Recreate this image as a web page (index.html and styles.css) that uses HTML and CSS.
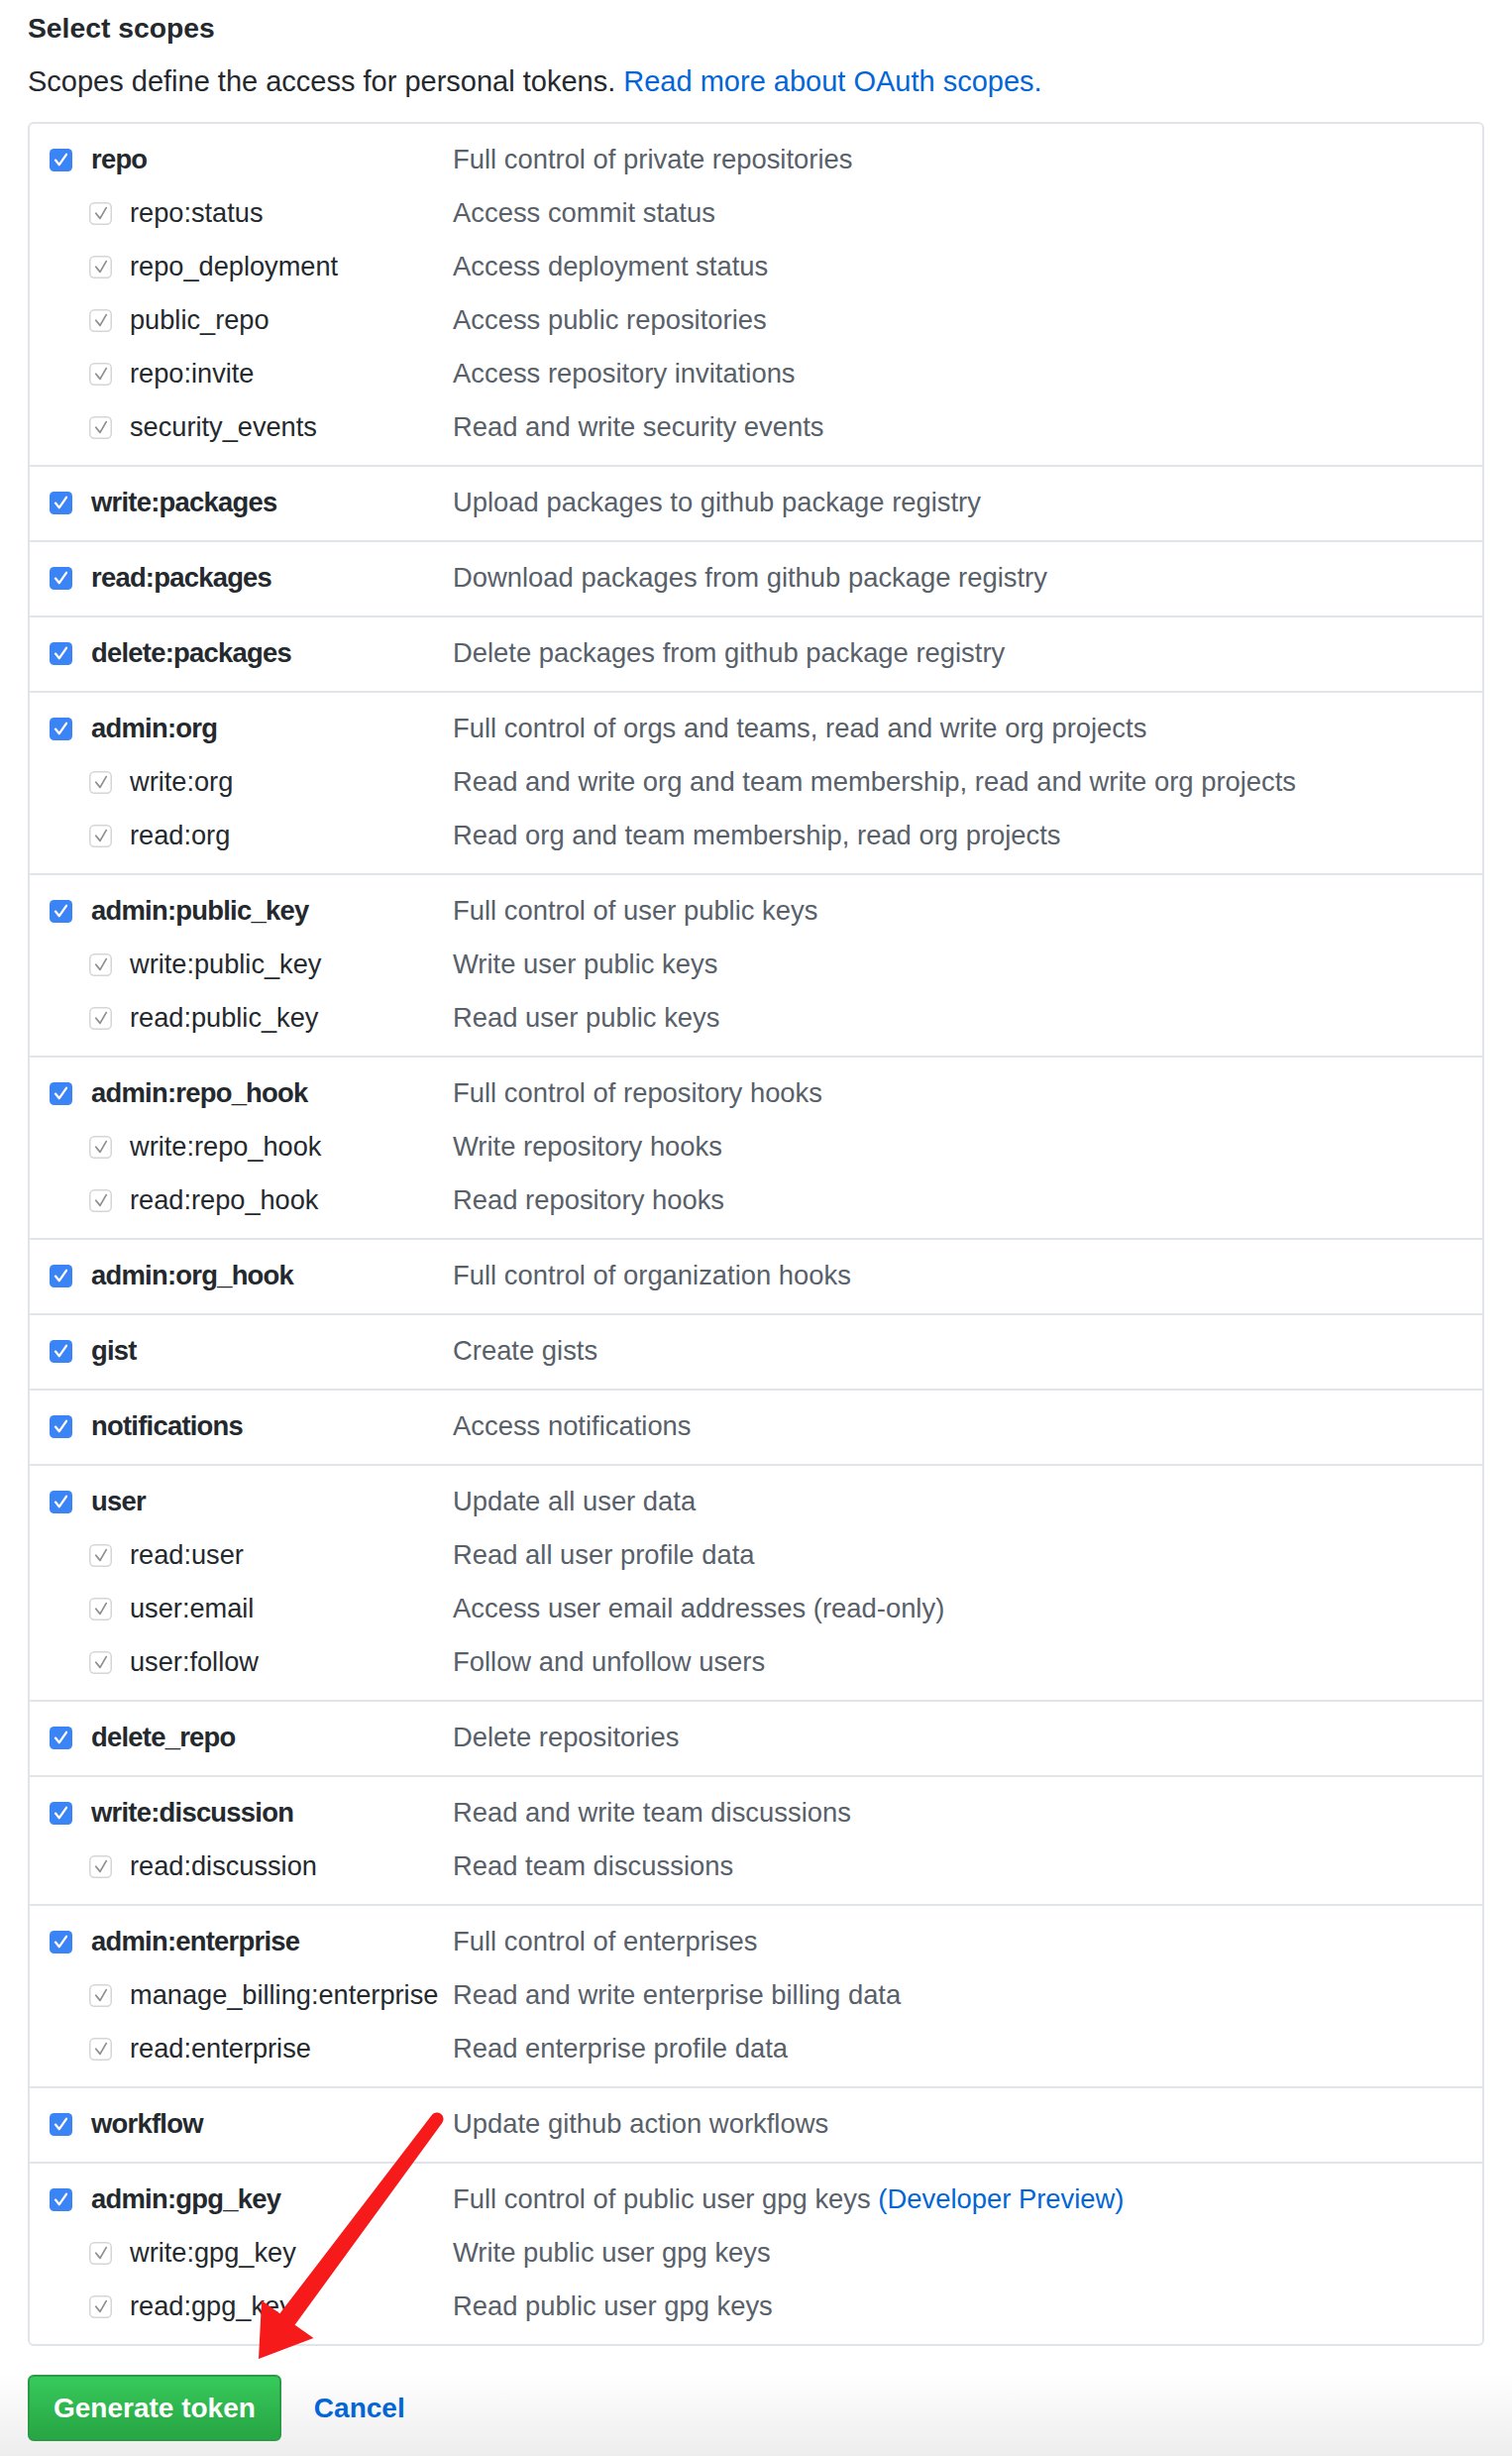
FILE: index.html
```html
<!DOCTYPE html>
<html lang="en">
<head>
<meta charset="utf-8">
<title>Select scopes</title>
<link rel="stylesheet" href="styles.css">
</head>
<body>
<svg class="defs" width="0" height="0" aria-hidden="true">
  <defs>
    <symbol id="on" viewBox="0 0 23 23">
      <rect x="0" y="0" width="23" height="23" rx="4.5" fill="#3a84f6"/>
      <path d="M6 11.6 L9.8 16.2 L17 5.8" fill="none" stroke="#fff" stroke-width="2.3" stroke-linecap="round" stroke-linejoin="round"/>
    </symbol>
    <symbol id="sub" viewBox="0 0 23 23">
      <rect x="0.75" y="0.75" width="21.5" height="21.5" rx="4.5" fill="#fff" stroke="#d6d6d6" stroke-width="1.5"/>
      <path d="M6.8 11.2 L11 16.4 L17.2 5.6" fill="none" stroke="#8f8f8f" stroke-width="1.7" stroke-linecap="round" stroke-linejoin="round"/>
    </symbol>
  </defs>
</svg>

<main class="page">
  <h2 class="title">Select scopes</h2>
  <p class="intro">Scopes define the access for personal tokens. <a class="link" href="#">Read more about OAuth scopes.</a></p>

  <div class="scopes">
    <div class="group">
      <div class="row main"><span class="name"><svg class="cb"><use href="#on"/></svg><b>repo</b></span><span class="desc">Full control of private repositories</span></div>
      <div class="row sub"><span class="name"><svg class="cb"><use href="#sub"/></svg>repo:status</span><span class="desc">Access commit status</span></div>
      <div class="row sub"><span class="name"><svg class="cb"><use href="#sub"/></svg>repo_deployment</span><span class="desc">Access deployment status</span></div>
      <div class="row sub"><span class="name"><svg class="cb"><use href="#sub"/></svg>public_repo</span><span class="desc">Access public repositories</span></div>
      <div class="row sub"><span class="name"><svg class="cb"><use href="#sub"/></svg>repo:invite</span><span class="desc">Access repository invitations</span></div>
      <div class="row sub"><span class="name"><svg class="cb"><use href="#sub"/></svg>security_events</span><span class="desc">Read and write security events</span></div>
    </div>
    <div class="group">
      <div class="row main"><span class="name"><svg class="cb"><use href="#on"/></svg><b>write:packages</b></span><span class="desc">Upload packages to github package registry</span></div>
    </div>
    <div class="group">
      <div class="row main"><span class="name"><svg class="cb"><use href="#on"/></svg><b>read:packages</b></span><span class="desc">Download packages from github package registry</span></div>
    </div>
    <div class="group">
      <div class="row main"><span class="name"><svg class="cb"><use href="#on"/></svg><b>delete:packages</b></span><span class="desc">Delete packages from github package registry</span></div>
    </div>
    <div class="group">
      <div class="row main"><span class="name"><svg class="cb"><use href="#on"/></svg><b>admin:org</b></span><span class="desc">Full control of orgs and teams, read and write org projects</span></div>
      <div class="row sub"><span class="name"><svg class="cb"><use href="#sub"/></svg>write:org</span><span class="desc">Read and write org and team membership, read and write org projects</span></div>
      <div class="row sub"><span class="name"><svg class="cb"><use href="#sub"/></svg>read:org</span><span class="desc">Read org and team membership, read org projects</span></div>
    </div>
    <div class="group">
      <div class="row main"><span class="name"><svg class="cb"><use href="#on"/></svg><b>admin:public_key</b></span><span class="desc">Full control of user public keys</span></div>
      <div class="row sub"><span class="name"><svg class="cb"><use href="#sub"/></svg>write:public_key</span><span class="desc">Write user public keys</span></div>
      <div class="row sub"><span class="name"><svg class="cb"><use href="#sub"/></svg>read:public_key</span><span class="desc">Read user public keys</span></div>
    </div>
    <div class="group">
      <div class="row main"><span class="name"><svg class="cb"><use href="#on"/></svg><b>admin:repo_hook</b></span><span class="desc">Full control of repository hooks</span></div>
      <div class="row sub"><span class="name"><svg class="cb"><use href="#sub"/></svg>write:repo_hook</span><span class="desc">Write repository hooks</span></div>
      <div class="row sub"><span class="name"><svg class="cb"><use href="#sub"/></svg>read:repo_hook</span><span class="desc">Read repository hooks</span></div>
    </div>
    <div class="group">
      <div class="row main"><span class="name"><svg class="cb"><use href="#on"/></svg><b>admin:org_hook</b></span><span class="desc">Full control of organization hooks</span></div>
    </div>
    <div class="group">
      <div class="row main"><span class="name"><svg class="cb"><use href="#on"/></svg><b>gist</b></span><span class="desc">Create gists</span></div>
    </div>
    <div class="group">
      <div class="row main"><span class="name"><svg class="cb"><use href="#on"/></svg><b>notifications</b></span><span class="desc">Access notifications</span></div>
    </div>
    <div class="group">
      <div class="row main"><span class="name"><svg class="cb"><use href="#on"/></svg><b>user</b></span><span class="desc">Update all user data</span></div>
      <div class="row sub"><span class="name"><svg class="cb"><use href="#sub"/></svg>read:user</span><span class="desc">Read all user profile data</span></div>
      <div class="row sub"><span class="name"><svg class="cb"><use href="#sub"/></svg>user:email</span><span class="desc">Access user email addresses (read-only)</span></div>
      <div class="row sub"><span class="name"><svg class="cb"><use href="#sub"/></svg>user:follow</span><span class="desc">Follow and unfollow users</span></div>
    </div>
    <div class="group">
      <div class="row main"><span class="name"><svg class="cb"><use href="#on"/></svg><b>delete_repo</b></span><span class="desc">Delete repositories</span></div>
    </div>
    <div class="group">
      <div class="row main"><span class="name"><svg class="cb"><use href="#on"/></svg><b>write:discussion</b></span><span class="desc">Read and write team discussions</span></div>
      <div class="row sub"><span class="name"><svg class="cb"><use href="#sub"/></svg>read:discussion</span><span class="desc">Read team discussions</span></div>
    </div>
    <div class="group">
      <div class="row main"><span class="name"><svg class="cb"><use href="#on"/></svg><b>admin:enterprise</b></span><span class="desc">Full control of enterprises</span></div>
      <div class="row sub"><span class="name"><svg class="cb"><use href="#sub"/></svg>manage_billing:enterprise</span><span class="desc">Read and write enterprise billing data</span></div>
      <div class="row sub"><span class="name"><svg class="cb"><use href="#sub"/></svg>read:enterprise</span><span class="desc">Read enterprise profile data</span></div>
    </div>
    <div class="group">
      <div class="row main"><span class="name"><svg class="cb"><use href="#on"/></svg><b>workflow</b></span><span class="desc">Update github action workflows</span></div>
    </div>
    <div class="group">
      <div class="row main"><span class="name"><svg class="cb"><use href="#on"/></svg><b>admin:gpg_key</b></span><span class="desc">Full control of public user gpg keys <a class="link" href="#">(Developer Preview)</a></span></div>
      <div class="row sub"><span class="name"><svg class="cb"><use href="#sub"/></svg>write:gpg_key</span><span class="desc">Write public user gpg keys</span></div>
      <div class="row sub"><span class="name"><svg class="cb"><use href="#sub"/></svg>read:gpg_key</span><span class="desc">Read public user gpg keys</span></div>
    </div>
  </div>
</main>

<footer class="actions">
  <button class="btn-primary" type="button">Generate token</button>
  <a class="cancel" href="#">Cancel</a>
</footer>

<svg class="arrow" width="200" height="262" viewBox="255 2126 200 262" aria-hidden="true">
  <path d="M435.8 2134.1 L282.4 2334.3 L264 2321 L261 2380 L316.5 2359 L297.6 2345.7 L446.2 2141.9 A6.5 6.5 0 0 0 435.8 2134.1 Z" fill="#f71a1a"/>
</svg>
</body>
</html>
```

FILE: styles.css
```css
* { box-sizing: border-box; }

html, body {
  margin: 0;
  padding: 0;
  background: #ffffff;
}

body {
  position: relative;
  font-family: "Liberation Sans", Arial, sans-serif;
  color: #24292e;
}

.defs {
  position: absolute;
  width: 0;
  height: 0;
  overflow: hidden;
}

.page {
  padding: 11px 0 0 28px;
}

.title {
  margin: 0;
  font-size: 28.3px;
  line-height: 35px;
  font-weight: 700;
  color: #24292e;
}

.intro {
  margin: 18px 0 0;
  font-size: 29px;
  line-height: 36px;
  color: #24292e;
}

.link {
  color: #0366d6;
  text-decoration: none;
}

.scopes {
  margin-top: 23px;
  width: 1470px;
  border: 2px solid #e1e4e8;
  border-radius: 6px;
}

.group {
  padding: 9px 0 11px;
}

.group + .group {
  border-top: 2px solid #e1e4e8;
}

.row {
  display: grid;
  grid-template-columns: 427px 1fr;
  align-items: center;
  height: 54px;
  font-size: 27.4px;
  line-height: 54px;
  white-space: nowrap;
}

.name {
  display: flex;
  align-items: center;
  color: #24292e;
  font-size: 27.2px;
}

.main .name {
  padding-left: 20px;
  gap: 19px;
}

.sub .name {
  padding-left: 60px;
  gap: 18px;
}

.name b {
  font-size: 27.4px;
  font-weight: 700;
  letter-spacing: -0.75px;
}

.cb {
  flex: none;
  width: 23px;
  height: 23px;
}

.desc {
  color: #586069;
}

.actions {
  display: flex;
  align-items: center;
  gap: 33px;
  padding: 29px 0 15px 28px;
  background: linear-gradient(to bottom, #ffffff 0%, #ffffff 25%, #ededed 100%);
}

.btn-primary {
  height: 67px;
  padding: 0 24px;
  border: 2px solid #2a9a45;
  border-radius: 6px;
  background: linear-gradient(to bottom, #37ca5b 0%, #28a745 92%);
  color: #ffffff;
  font-family: "Liberation Sans", Arial, sans-serif;
  font-size: 28px;
  font-weight: 700;
  line-height: 63px;
}

.cancel {
  font-size: 28px;
  font-weight: 700;
  color: #0366d6;
  text-decoration: none;
}

.arrow {
  position: absolute;
  left: 255px;
  top: 2126px;
  pointer-events: none;
}
```
